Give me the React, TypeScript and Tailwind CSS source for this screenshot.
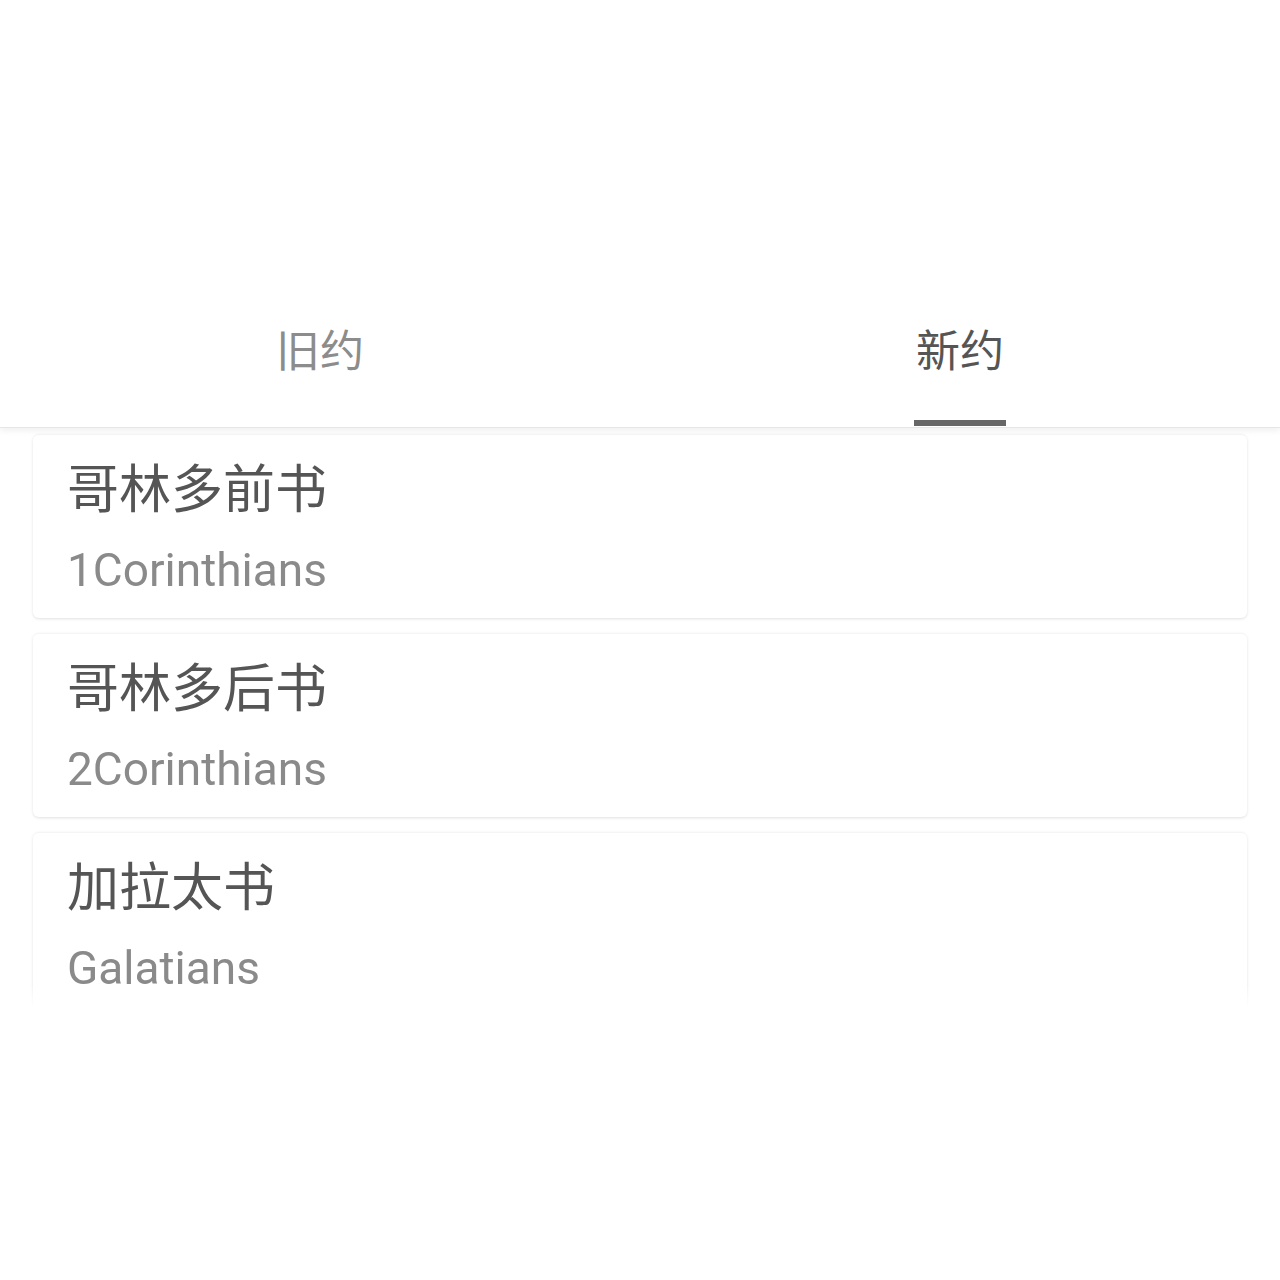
import React, { useState } from "react";

type Book = { zh: string; en: string };

const books: Book[] = [
  { zh: "哥林多前书", en: "1Corinthians" },
  { zh: "哥林多后书", en: "2Corinthians" },
  { zh: "加拉太书", en: "Galatians" },
];

const cjk = "font-['Noto_Sans_CJK_SC',sans-serif]";

const Tab = ({
  label,
  active,
  onClick,
}: {
  label: string;
  active: boolean;
  onClick: () => void;
}) => (
  <button
    onClick={onClick}
    className="flex-1 flex flex-col items-center justify-end h-full"
  >
    <span
      className={`${cjk} text-[44px] leading-[52px] ${
        active ? "text-[#555555]" : "text-[#8c8c8c]"
      }`}
    >
      {label}
    </span>
    <span
      className={`mt-[46px] mb-px h-[6px] w-[92px] ${
        active ? "bg-[#666666]" : "bg-transparent"
      }`}
    />
  </button>
);

const BookCard = ({ book }: { book: Book }) => (
  <div className="mx-[33px] rounded-md bg-white pl-[34px] pr-[35px] pt-[25px] pb-[25px] shadow-[0_1px_3px_rgba(0,0,0,0.12)] border-t border-[#f5f5f5]">
    <div className={`${cjk} text-[52px] leading-none text-[#555555]`}>
      {book.zh}
    </div>
    <div className="mt-[35px] font-['Roboto',sans-serif] text-[46px] leading-none text-[#8a8a8a]">
      {book.en}
    </div>
  </div>
);

export default function App() {
  const [tab, setTab] = useState(1);

  return (
    <div className="w-[1280px] h-[1280px] bg-white overflow-hidden">
      {/* Tab bar */}
      <div className="relative z-10 flex h-[428px] bg-white border-b border-[#e6e6e6] shadow-[0_3px_6px_rgba(0,0,0,0.06)]">
        <Tab label="旧约" active={tab === 0} onClick={() => setTab(0)} />
        <Tab label="新约" active={tab === 1} onClick={() => setTab(1)} />
      </div>

      {/* Book list with fading bottom edge */}
      <div className="h-[580px] overflow-hidden pt-[6px] [mask-image:linear-gradient(to_bottom,black_96%,transparent)]">
        <div className="flex flex-col gap-[15px]">
          {books.map((b) => (
            <BookCard key={b.en} book={b} />
          ))}
        </div>
      </div>
    </div>
  );
}
